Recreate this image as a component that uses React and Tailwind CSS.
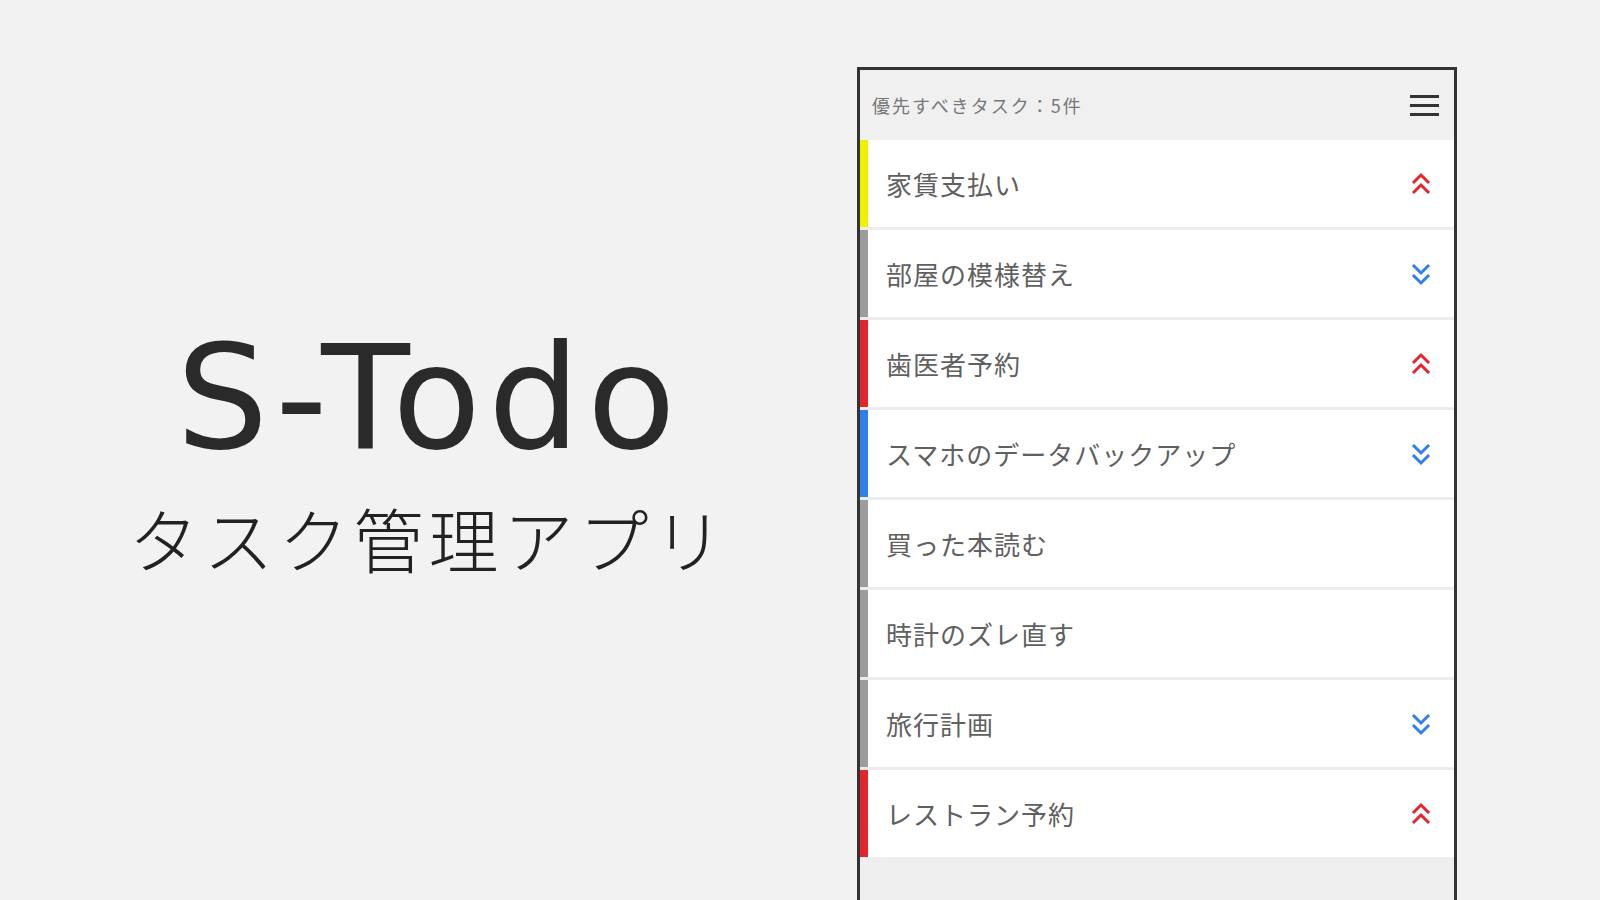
import React from 'react';

const tasks = [
  { title: '家賃支払い', bar: 'bg-[#eef200]', mark: 'up' },
  { title: '部屋の模様替え', bar: 'bg-[#9c9c9c]', mark: 'down' },
  { title: '歯医者予約', bar: 'bg-[#e3262b]', mark: 'up' },
  { title: 'スマホのデータバックアップ', bar: 'bg-[#2f80ed]', mark: 'down' },
  { title: '買った本読む', bar: 'bg-[#9c9c9c]', mark: null },
  { title: '時計のズレ直す', bar: 'bg-[#9c9c9c]', mark: null },
  { title: '旅行計画', bar: 'bg-[#9c9c9c]', mark: 'down' },
  { title: 'レストラン予約', bar: 'bg-[#e3262b]', mark: 'up' },
];

const Chevrons = ({ dir }) => {
  if (dir === 'up') {
    return (
      <svg width="22" height="26" viewBox="0 0 22 26" fill="none" stroke="#e3262b" strokeWidth="3" strokeLinecap="square">
        <polyline points="4,11 11,4 18,11" />
        <polyline points="4,21 11,14 18,21" />
      </svg>
    );
  }
  return (
    <svg width="22" height="26" viewBox="0 0 22 26" fill="none" stroke="#2f80ed" strokeWidth="3" strokeLinecap="square">
      <polyline points="4,5 11,12 18,5" />
      <polyline points="4,15 11,22 18,15" />
    </svg>
  );
};

const TaskRow = ({ task }) => (
  <div className="flex h-[87px] bg-white items-stretch">
    <div className={`w-[8px] ${task.bar}`} />
    <div className="flex-1 flex items-center pl-[18px] pr-[22px]">
      <span className="flex-1 text-[26px] tracking-[1px] text-[#606060] leading-none" style={{ fontFamily: '"Noto Sans CJK JP", sans-serif' }}>
        {task.title}
      </span>
      {task.mark && <Chevrons dir={task.mark} />}
    </div>
  </div>
);

const App = () => {
  return (
    <div className="w-full h-[900px] bg-[#f2f2f2] flex overflow-hidden">
      <div className="w-[852px] flex flex-col items-center pt-[325px]">
        <h1 className="text-[145px] leading-none tracking-[7px] pl-[7px] text-[#2a2a2a] font-normal" style={{ fontFamily: '"DejaVu Sans", Verdana, sans-serif' }}>
          S-Todo
        </h1>
        <p className="mt-[33px] text-[70px] leading-none tracking-[5px] pl-[5px] text-[#222] font-light" style={{ fontFamily: '"Noto Sans CJK JP", sans-serif' }}>
          タスク管理アプリ
        </p>
      </div>

      <div className="ml-[5px] mt-[67px] w-[600px] h-[833px] border-[3px] border-b-0 border-[#333] bg-[#efefef] flex flex-col">
        <div className="h-[70px] bg-[#f0f0f0] flex items-center justify-between pl-[12px] pr-[15px]">
          <span className="text-[18px] tracking-[2px] text-[#777] leading-none" style={{ fontFamily: '"Noto Sans CJK JP", sans-serif' }}>
            優先すべきタスク：5件
          </span>
          <div className="flex flex-col gap-[6px]">
            <div className="w-[29px] h-[3px] bg-[#333]" />
            <div className="w-[29px] h-[3px] bg-[#333]" />
            <div className="w-[29px] h-[3px] bg-[#333]" />
          </div>
        </div>
        <div className="flex flex-col gap-[3px] bg-[#ececec]">
          {tasks.map((t) => (
            <TaskRow key={t.title} task={t} />
          ))}
        </div>
      </div>
    </div>
  );
};

export default App;
